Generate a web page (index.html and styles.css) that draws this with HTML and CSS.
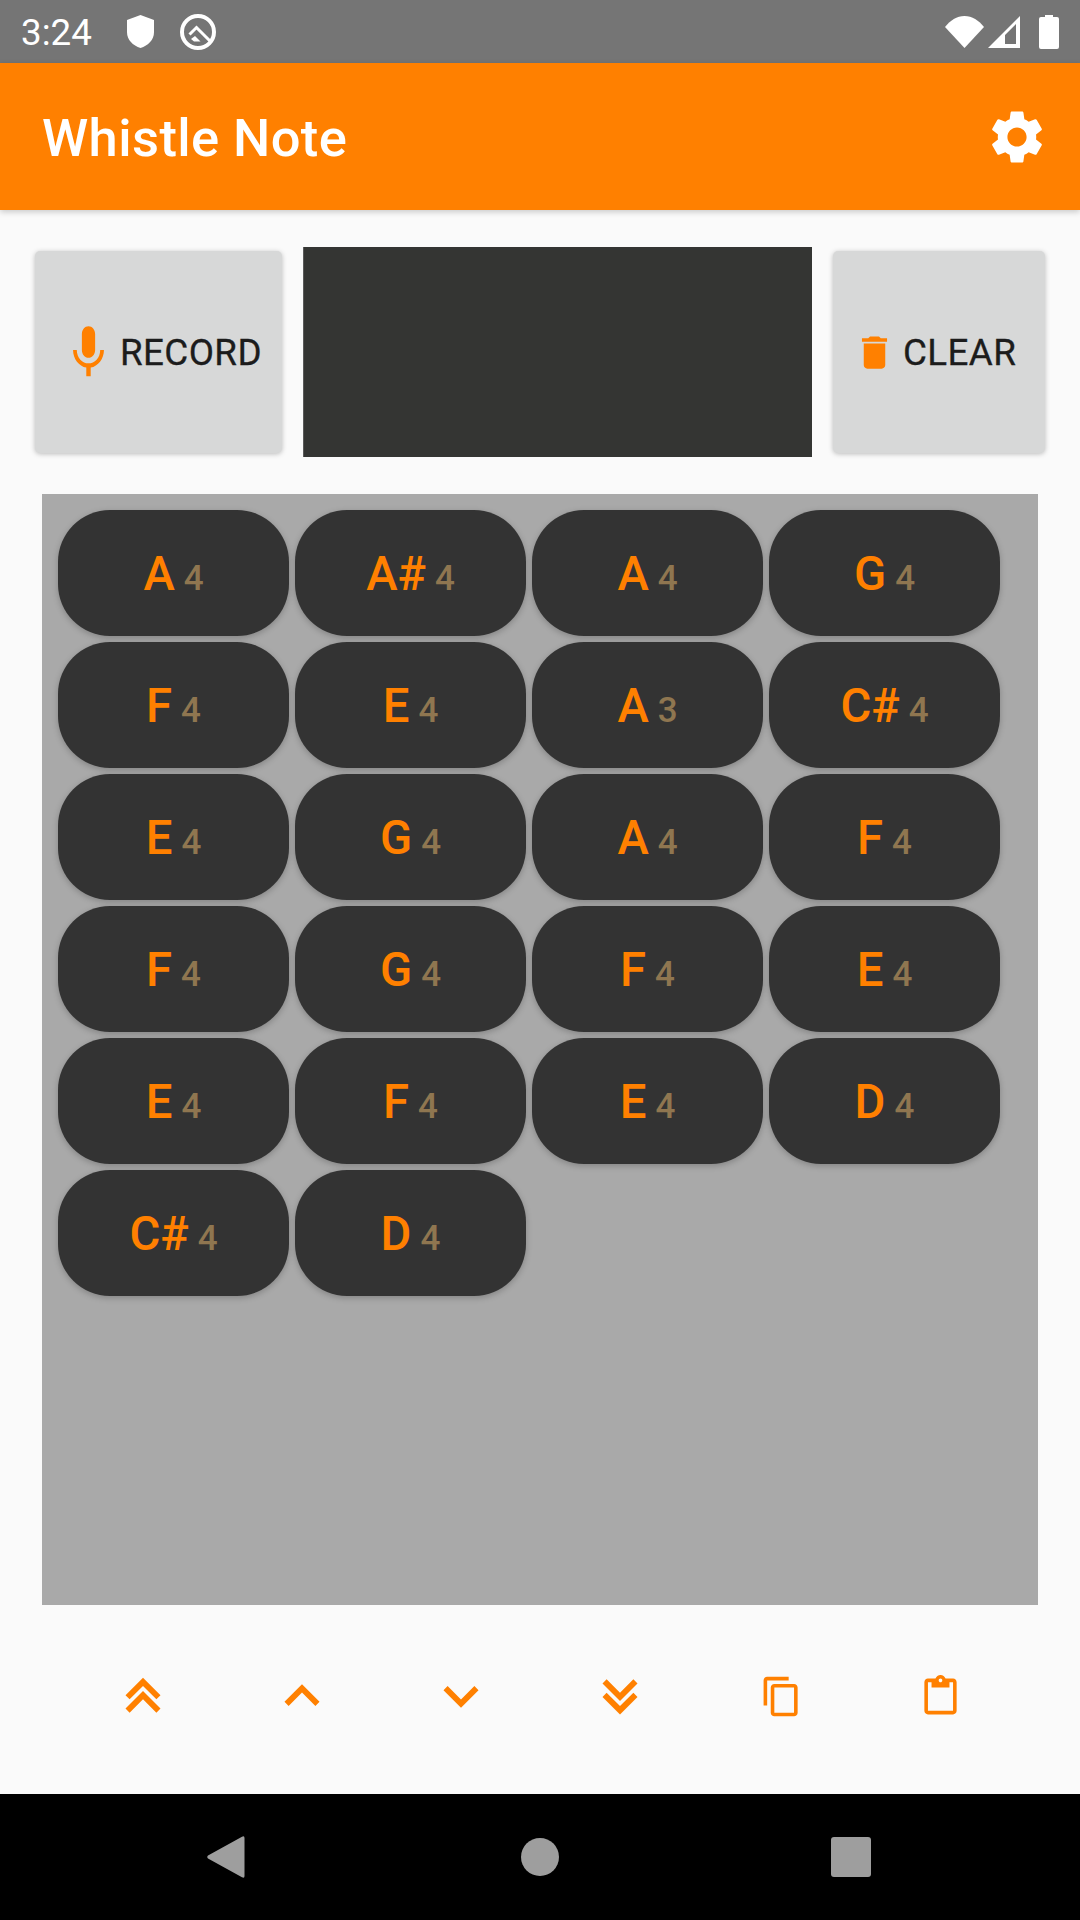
FILE: index.html
```html
<!DOCTYPE html>
<html lang="en">
<head>
  <meta charset="UTF-8">
  <title>Whistle Note</title>
  <link rel="stylesheet" href="styles.css">
</head>
<body>

  <div class="status-bar">
    <span class="clock">3:24</span>
    <svg class="shield" viewBox="0 0 27 33"><path d="M13.5 0 27 5v12c0 8-5.8 13.6-13.5 16C5.800 30.600 0 25 0 17V5z"/></svg>
    <svg class="q-badge" viewBox="0 0 36 36">
      <circle class="q-ring" cx="18" cy="18" r="16"/>
      <path class="q-tail" d="M9.500 20.500 16.500 13.500 31 28"/>
      <path d="M15 22 20.500 27.500H14L11 25z"/>
    </svg>
    <div class="status-right">
      <svg class="wifi" viewBox="0 0 39 32"><path d="M0 11C5 4.500 12 0 19.500 0S34 4.500 39 11L19.500 32z"/></svg>
      <svg class="signal" viewBox="0 0 32 32"><path fill-rule="evenodd" d="M32 0V32H0zM28 8 17 19V28H28z"/></svg>
      <svg class="battery" viewBox="0 0 20 34"><path d="M6 0H14V2H18Q20 2 20 4V32Q20 34 18 34H2Q0 34 0 32V4Q0 2 2 2H6z"/></svg>
    </div>
  </div>

  <div class="app-bar">
    <span class="app-title">Whistle Note</span>
    <svg class="gear" viewBox="0 0 24 24"><path d="M19.140 12.940c.04-.3.06-.61.06-.94 0-.32-.02-.64-.07-.94l2.030-1.580c.18-.14.23-.41.12-.61l-1.920-3.320c-.12-.22-.37-.29-.59-.22l-2.390.96c-.5-.38-1.030-.7-1.620-.94l-.36-2.540c-.04-.24-.24-.41-.48-.41h-3.840c-.24 0-.43.17-.47.41l-.36 2.540c-.59.24-1.130.57-1.620.94l-2.390-.96c-.22-.08-.47 0-.59.22L2.740 8.870c-.12.21-.08.47.12.61l2.030 1.580c-.05.3-.09.63-.09.94s.02.64.07.94l-2.030 1.580c-.18.14-.23.41-.12.61l1.920 3.320c.12.22.37.29.59.22l2.390-.96c.5.38 1.030.7 1.620.94l.36 2.540c.05.24.24.41.48.41h3.840c.24 0 .44-.17.47-.41l.36-2.540c.59-.24 1.130-.56 1.620-.94l2.390.96c.22.08.47 0 .59-.22l1.920-3.320c.12-.22.07-.47-.12-.61l-2.010-1.580zM12 15.600c-1.980 0-3.600-1.620-3.600-3.600s1.620-3.600 3.600-3.600 3.600 1.620 3.600 3.600-1.620 3.600-3.600 3.600z"/></svg>
  </div>

  <div class="top-row">
    <div class="action-btn record-btn">
      <svg class="mic" viewBox="0 0 24 24" preserveAspectRatio="none"><path d="M12 14c1.660 0 3-1.340 3-3V5c0-1.660-1.340-3-3-3S9 3.340 9 5v6c0 1.660 1.340 3 3 3zm5.300-3c0 3-2.540 5.100-5.300 5.100S6.700 14 6.700 11H5c0 3.410 2.720 6.230 6 6.720V21h2v-3.280c3.280-.48 6-3.300 6-6.720h-1.700z"/></svg>
      <span>RECORD</span>
    </div>
    <div class="wave-view"></div>
    <div class="action-btn clear-btn">
      <svg class="trash" viewBox="0 0 24 24"><path d="M6 19c0 1.100.9 2 2 2h8c1.100 0 2-.9 2-2V7H6v12zM19 4h-3.500l-1-1h-5l-1 1H5v2h14V4z"/></svg>
      <span>CLEAR</span>
    </div>
  </div>

  <div class="note-panel">
    <div class="note"><b>A</b><i>4</i></div>
    <div class="note"><b>A#</b><i>4</i></div>
    <div class="note"><b>A</b><i>4</i></div>
    <div class="note"><b>G</b><i>4</i></div>

    <div class="note"><b>F</b><i>4</i></div>
    <div class="note"><b>E</b><i>4</i></div>
    <div class="note"><b>A</b><i>3</i></div>
    <div class="note"><b>C#</b><i>4</i></div>

    <div class="note"><b>E</b><i>4</i></div>
    <div class="note"><b>G</b><i>4</i></div>
    <div class="note"><b>A</b><i>4</i></div>
    <div class="note"><b>F</b><i>4</i></div>

    <div class="note"><b>F</b><i>4</i></div>
    <div class="note"><b>G</b><i>4</i></div>
    <div class="note"><b>F</b><i>4</i></div>
    <div class="note"><b>E</b><i>4</i></div>

    <div class="note"><b>E</b><i>4</i></div>
    <div class="note"><b>F</b><i>4</i></div>
    <div class="note"><b>E</b><i>4</i></div>
    <div class="note"><b>D</b><i>4</i></div>

    <div class="note"><b>C#</b><i>4</i></div>
    <div class="note"><b>D</b><i>4</i></div>
  </div>

  <div class="tool-row">
    <div class="tool"><svg class="chevron" viewBox="0 0 24 24"><path d="M7.410 13.110 12 8.530l4.590 4.580L18 11.700l-6-6-6 6z"/><path d="M7.410 17.710 12 13.130l4.590 4.580L18 16.300l-6-6-6 6z"/></svg></div>
    <div class="tool"><svg class="chevron" viewBox="0 0 24 24"><path d="M7.410 15.410 12 10.830l4.590 4.580L18 14l-6-6-6 6z"/></svg></div>
    <div class="tool"><svg class="chevron" viewBox="0 0 24 24"><path d="M7.410 8.590 12 13.170l4.590-4.580L18 10l-6 6-6-6z"/></svg></div>
    <div class="tool"><svg class="chevron" viewBox="0 0 24 24"><path d="M7.410 6.290 12 10.870l4.590-4.580L18 7.700l-6 6-6-6z"/><path d="M7.410 10.890 12 15.470l4.590-4.580L18 12.300l-6 6-6-6z"/></svg></div>
    <div class="tool tool-copy"><svg class="doc-icon" viewBox="0 0 24 24"><path d="M16 1H4c-1.100 0-2 .9-2 2v14h2V3h12V1zm3 4H8c-1.100 0-2 .9-2 2v14c0 1.100.9 2 2 2h11c1.100 0 2-.9 2-2V7c0-1.100-.9-2-2-2zm0 16H8V7h11v14z"/></svg></div>
    <div class="tool"><svg class="doc-icon" viewBox="0 0 24 24"><path d="M19 2h-4.180C14.400.84 13.300 0 12 0c-1.300 0-2.400.84-2.820 2H5c-1.100 0-2 .9-2 2v16c0 1.100.9 2 2 2h14c1.100 0 2-.9 2-2V4c0-1.100-.9-2-2-2zm-7 0c.55 0 1 .45 1 1s-.45 1-1 1-1-.45-1-1 .45-1 1-1zm7 18H5V4h2v3h10V4h2v16z"/></svg></div>
  </div>

  <div class="nav-bar">
    <svg class="nav-back" viewBox="0 0 38 42"><path d="M35 .8Q37.500-.6 37.500 2V40Q37.500 42.600 35 41.200L1 22.500Q-.5 21 1 19.500z"/></svg>
    <div class="nav-home"></div>
    <div class="nav-recent"></div>
  </div>

</body>
</html>
```

FILE: styles.css
```css
* {
  box-sizing: border-box;
}

body {
  margin: 0;
  width: 1080px;
  height: 1920px;
  overflow: hidden;
  display: flex;
  flex-direction: column;
  background: #fafafa;
  font-family: Roboto, "Liberation Sans", sans-serif;
}

svg {
  display: block;
  flex: none;
}

/* status bar */
.status-bar {
  height: 63px;
  flex: none;
  display: flex;
  align-items: center;
  padding-left: 21px;
  background: #757575;
  fill: #fff;
}

.clock {
  width: 106px;
  padding-top: 2px;
  font-size: 36.75px;
  color: #fff;
}

.shield {
  width: 27px;
  height: 33px;
  margin-right: 26px;
}

.q-badge {
  width: 36px;
  height: 36px;
}

.q-ring {
  fill: none;
  stroke: #fff;
  stroke-width: 4;
}

.q-tail {
  fill: none;
  stroke: #fff;
  stroke-width: 3;
}

.status-right {
  margin-left: auto;
  margin-right: 21px;
  display: flex;
  align-items: center;
}

.wifi {
  width: 39px;
  height: 32px;
  margin-right: 4px;
}

.signal {
  width: 32px;
  height: 32px;
  margin-right: 19px;
}

.battery {
  width: 20px;
  height: 34px;
}

/* app bar */
.app-bar {
  height: 147px;
  flex: none;
  position: relative;
  display: flex;
  align-items: center;
  justify-content: space-between;
  padding: 0 31px 0 42px;
  background: #ff8000;
  box-shadow: 0 2px 6px rgba(0, 0, 0, 0.2);
}

.app-title {
  padding-top: 3px;
  font-size: 52.5px;
  font-weight: 500;
  letter-spacing: 0.4px;
  color: #fff;
}

.gear {
  width: 64px;
  height: 64px;
  fill: #fff;
}

/* record / clear row */
.top-row {
  display: flex;
  align-items: center;
  margin: 37px 0 0 35px;
}

.action-btn {
  height: 202px;
  display: flex;
  align-items: center;
  gap: 5px;
  background: #d7d8d8;
  border-radius: 5px;
  box-shadow: 0 1px 5px rgba(0, 0, 0, 0.25);
  font-size: 36.75px;
  letter-spacing: 0.4px;
  color: #1c1c1c;
  fill: #ff8000;
  -webkit-text-stroke: 0.3px #1c1c1c;
}

.record-btn {
  width: 247px;
  padding-left: 27px;
}

.clear-btn {
  width: 212px;
  padding-left: 20px;
  gap: 7px;
}

.mic {
  width: 53px;
  height: 63px;
}

.trash {
  width: 43px;
  height: 43px;
}

.wave-view {
  width: 509px;
  height: 210px;
  margin: 0 21px;
  background: #343533;
  border-left: 1px solid #5a5a5a;
}

/* notes */
.note-panel {
  width: 996px;
  height: 1111px;
  margin: 37px 0 0 42px;
  padding: 16px;
  display: grid;
  grid-template-columns: repeat(4, 231px);
  grid-auto-rows: 126px;
  gap: 6px;
  background: #a9a9a9;
}

.note {
  display: flex;
  align-items: baseline;
  justify-content: center;
  gap: 9px;
  padding-top: 36px;
  background: #333;
  border-radius: 52px;
  box-shadow: 0 2px 6px rgba(0, 0, 0, 0.22);
}

.note b {
  font-size: 47.25px;
  font-weight: 500;
  color: #ff8000;
}

.note i {
  font-size: 35px;
  font-style: normal;
  font-weight: 500;
  color: #8f7650;
}

/* bottom tools */
.tool-row {
  flex: 1;
  display: flex;
  align-items: center;
  padding: 0 0 7px 63.500px;
  fill: #ff8000;
}

.tool {
  width: 159px;
  display: flex;
  justify-content: center;
}

.tool-copy {
  margin-left: 2.500px;
}

.chevron {
  width: 70px;
  height: 70px;
}

.doc-icon {
  width: 43px;
  height: 43px;
}

/* nav bar */
.nav-bar {
  height: 126px;
  flex: none;
  display: flex;
  align-items: center;
  padding-left: 207px;
  background: #000;
}

.nav-back {
  width: 38px;
  height: 42px;
  fill: #9e9e9e;
}

.nav-home {
  width: 38px;
  height: 38px;
  margin-left: 276px;
  border-radius: 50%;
  background: #9e9e9e;
}

.nav-recent {
  width: 40px;
  height: 40px;
  margin-left: 272px;
  border-radius: 3px;
  background: #9e9e9e;
}
```
